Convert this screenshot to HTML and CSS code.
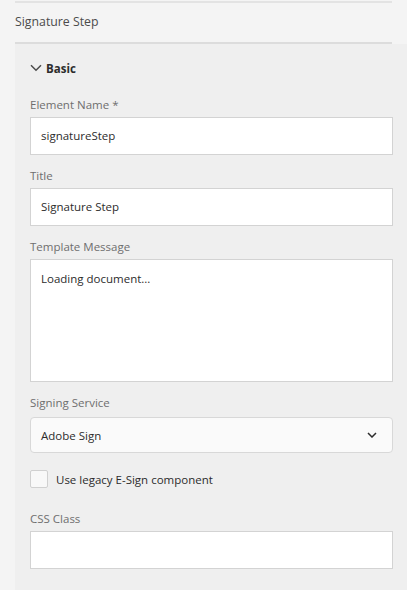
FILE: index.html
```html
<!DOCTYPE html>
<html>
<head>
<meta charset="utf-8">
<link rel="stylesheet" href="styles.css">
</head>
<body>
<div class="page">
  <div class="header">Signature Step</div>
  <div class="panel">
    <div class="section-title">
      <svg class="chev" width="12" height="8" viewBox="0 0 12 8"><path d="M1 1.2 L6 6.2 L11 1.2" fill="none" stroke="#4b4b4b" stroke-width="1.5"/></svg>
      <span>Basic</span>
    </div>
    <div class="field">
      <div class="label">Element Name *</div>
      <div class="input">signatureStep</div>
    </div>
    <div class="field">
      <div class="label">Title</div>
      <div class="input">Signature Step</div>
    </div>
    <div class="field">
      <div class="label">Template Message</div>
      <div class="input textarea">Loading document...</div>
    </div>
    <div class="field">
      <div class="label">Signing Service</div>
      <div class="select">
        <span>Adobe Sign</span>
        <svg width="10" height="6" viewBox="0 0 10 6"><path d="M1 1 L5 5 L9 1" fill="none" stroke="#2c2c2c" stroke-width="1.5"/></svg>
      </div>
    </div>
    <div class="check-row">
      <span class="box"></span>
      <span>Use legacy E-Sign component</span>
    </div>
    <div class="field">
      <div class="label">CSS Class</div>
      <div class="input"></div>
    </div>
  </div>
</div>
</body>
</html>
```

FILE: styles.css
```css
html, body {
  margin: 0;
  padding: 0;
  background: #f4f4f4;
  font-family: "Open Sans", "Noto Sans", sans-serif;
  color: #2c2c2c;
}
.page {
  width: 407px;
  height: 590px;
  overflow: hidden;
}
.header {
  margin: 1px 15px 0 15px;
  border-top: 2px solid #e3e3e3;
  border-bottom: 2px solid #dcdcdc;
  height: 39px;
  box-sizing: content-box;
  font-size: 12.3px;
  line-height: 38px;
  color: #4b4b4b;
  width: 377px;
}
.panel {
  margin-left: 15px;
  background: #efefef;
  padding: 14px 14px 40px 15px;
  min-height: 600px;
  display: flex;
  flex-direction: column;
}
.section-title {
  display: flex;
  align-items: center;
  height: 20px;
  gap: 4px;
  font-size: 11.5px;
  font-weight: 700;
  color: #2c2c2c;
  margin-bottom: 17px;
}
.chev { display: block; }
.field { margin-bottom: 11px; }
.label {
  font-size: 11.5px;
  line-height: 20px;
  height: 20px;
  color: #6e6e6e;
  margin-bottom: 2px;
}
.input {
  box-sizing: border-box;
  height: 38px;
  background: #fff;
  border: 1px solid #d3d3d3;
  padding: 0 10px;
  font-size: 11.5px;
  line-height: 36px;
  color: #2c2c2c;
}
.textarea {
  height: 123px;
  line-height: 18px;
  padding-top: 10px;
}
.select {
  box-sizing: border-box;
  height: 36px;
  margin-top: 4px;
  background: #fafafa;
  border: 1px solid #d8d8d8;
  border-radius: 4px;
  display: flex;
  align-items: center;
  justify-content: space-between;
  padding: 0 15px 0 10px;
  font-size: 11.5px;
}
.select svg { display: block; }
.check-row {
  display: flex;
  align-items: center;
  gap: 8px;
  height: 18px;
  margin-top: 6px;
  margin-bottom: 21px;
  font-size: 11.5px;
  color: #2c2c2c;
}
.box {
  box-sizing: border-box;
  width: 18px;
  height: 18px;
  border: 1px solid #d0d0d0;
  background: #f8f8f8;
  border-radius: 2px;
}
```
